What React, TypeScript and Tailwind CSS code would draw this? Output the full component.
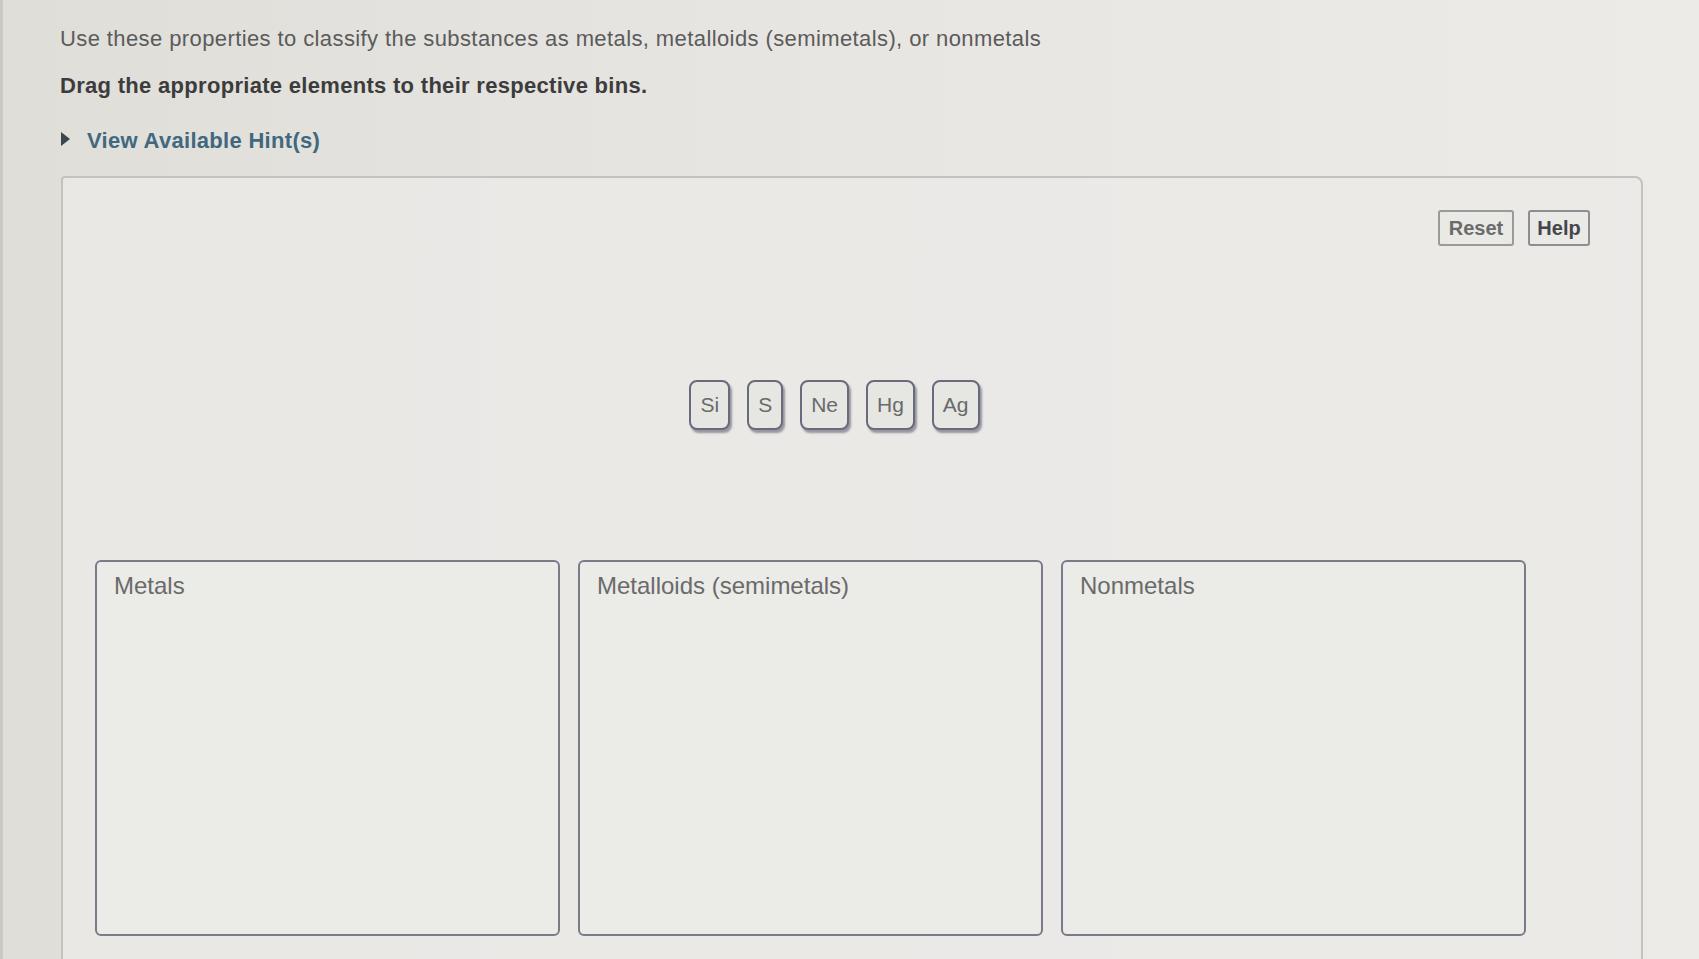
import React from "react";

const tiles = ["Si", "S", "Ne", "Hg", "Ag"];
const bins = ["Metals", "Metalloids (semimetals)", "Nonmetals"];

export default function App() {
  return (
    <div
      className="w-[1699px] h-[959px] overflow-hidden border-l-[3px] border-[#c9c8c3] bg-gradient-to-r from-[#dfded9] via-[#e7e6e2] to-[#ecebe8] pl-[57px] pr-[56px]"
      style={{ fontFamily: '"Liberation Sans", Arial, sans-serif' }}
    >
      <div className="pt-[25px] text-[22px] leading-[27px] tracking-[0.4px] text-[#5b5b5b]">
        Use these properties to classify the substances as metals, metalloids (semimetals), or nonmetals
      </div>
      <div className="mt-[20px] text-[22px] leading-[27px] tracking-[0.3px] font-bold text-[#3c3c3c]">
        Drag the appropriate elements to their respective bins.
      </div>
      <div className="mt-[28px] flex items-center gap-[16px] text-[22px] leading-[27px] tracking-[0.3px] font-bold text-[#41687f]">
        <svg width="11" height="16" viewBox="0 0 11 16" className="mb-[3px]">
          <path d="M1 1 L10 8 L1 15 Z" fill="#3b4650" />
        </svg>
        <span>View Available Hint(s)</span>
      </div>

      <div className="mt-[22px] ml-[1px] h-[820px] rounded-tr-[8px] rounded-tl-[4px] border-2 border-[#c3c2be] bg-[#ebeae7]/80 pt-[32px] pl-[32px] pr-[51px]">
        <div className="flex justify-end gap-[14px]">
          <button className="h-[36px] w-[76px] rounded-[3px] border-2 border-[#9a9a9a] bg-[#e9e9e6] text-[20px] font-bold text-[#6b6b6b]">
            Reset
          </button>
          <button className="h-[36px] w-[62px] rounded-[3px] border-2 border-[#8d8d92] bg-[#e9e9e6] text-[20px] font-bold text-[#45454d]">
            Help
          </button>
        </div>

        <div className="mt-[134px] flex justify-center gap-[17px] pr-[16px]">
          {tiles.map((t) => (
            <div
              key={t}
              className="flex h-[50px] items-center rounded-[8px] border-[2.5px] border-[#6a6a7c] bg-[#e6e6e3] px-[9px] text-[21px] text-[#6a6a6a] shadow-[2px_3px_2px_rgba(70,70,90,0.5)]"
            >
              {t}
            </div>
          ))}
        </div>

        <div className="mt-[130px] grid grid-cols-3 gap-[18px] pr-[64px]">
          {bins.map((b) => (
            <div
              key={b}
              className="h-[376px] rounded-[6px] border-2 border-[#7a7a88] bg-[#ebebe8] px-[17px] pt-[9px] text-[24px] leading-[30px] text-[#6a6a6a]"
            >
              {b}
            </div>
          ))}
        </div>
      </div>
    </div>
  );
}
